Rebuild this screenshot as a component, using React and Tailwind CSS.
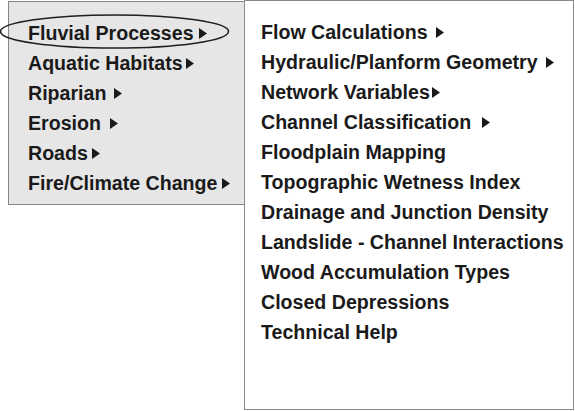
const mainItems = [
  { label: 'Fluvial Processes', gap: 'ml-[5px]' },
  { label: 'Aquatic Habitats', gap: 'ml-[3px]' },
  { label: 'Riparian', gap: 'ml-[8px]' },
  { label: 'Erosion', gap: 'ml-[9px]' },
  { label: 'Roads', gap: 'ml-[4px]' },
  { label: 'Fire/Climate Change', gap: 'ml-[5px]' },
]

const subItems = [
  { label: 'Flow Calculations', gap: 'ml-[8px]' },
  { label: 'Hydraulic/Planform Geometry', gap: 'ml-[8px]' },
  { label: 'Network Variables', gap: 'ml-[2px]' },
  { label: 'Channel Classification', gap: 'ml-[11px]' },
  { label: 'Floodplain Mapping' },
  { label: 'Topographic Wetness Index' },
  { label: 'Drainage and Junction Density' },
  { label: 'Landslide - Channel Interactions' },
  { label: 'Wood Accumulation Types' },
  { label: 'Closed Depressions' },
  { label: 'Technical Help' },
]

function Arrow({ className }) {
  return (
    <svg width="8" height="11" viewBox="0 0 8 11" className={`shrink-0 ${className}`}>
      <path d="M0 0 L8 5.5 L0 11 Z" fill="#1a1a1a" />
    </svg>
  )
}

function Item({ label, gap }) {
  return (
    <div className="flex h-[30px] items-center whitespace-nowrap">
      <span>{label}</span>
      {gap && <Arrow className={gap} />}
    </div>
  )
}

export default function App() {
  return (
    <div
      className="relative h-[411px] w-[575px] overflow-hidden bg-white text-[19.6px] font-bold leading-[30px] text-[#1a1a1a]"
      style={{ fontFamily: '"Liberation Sans", Arial, sans-serif' }}
    >
      <div className="flex items-start">
        <div className="ml-[8px] mt-[1px] w-[237px] border border-[#868686] bg-[#e6e6e6] pb-[6px] pl-[19px] pt-[16px]">
          {mainItems.map((it) => (
            <Item key={it.label} {...it} />
          ))}
        </div>
        <div className="relative z-10 -ml-px h-[410px] w-[330px] border border-[#8a8a8a] bg-white pl-[16px] pt-[16px]">
          {subItems.map((it) => (
            <Item key={it.label} {...it} />
          ))}
        </div>
      </div>
      <svg className="absolute left-0 top-0 z-20" width="240" height="60" viewBox="0 0 240 60">
        <ellipse cx="114.5" cy="31.5" rx="114" ry="16.5" fill="none" stroke="#1f1f1f" strokeWidth="1.6" />
      </svg>
    </div>
  )
}
